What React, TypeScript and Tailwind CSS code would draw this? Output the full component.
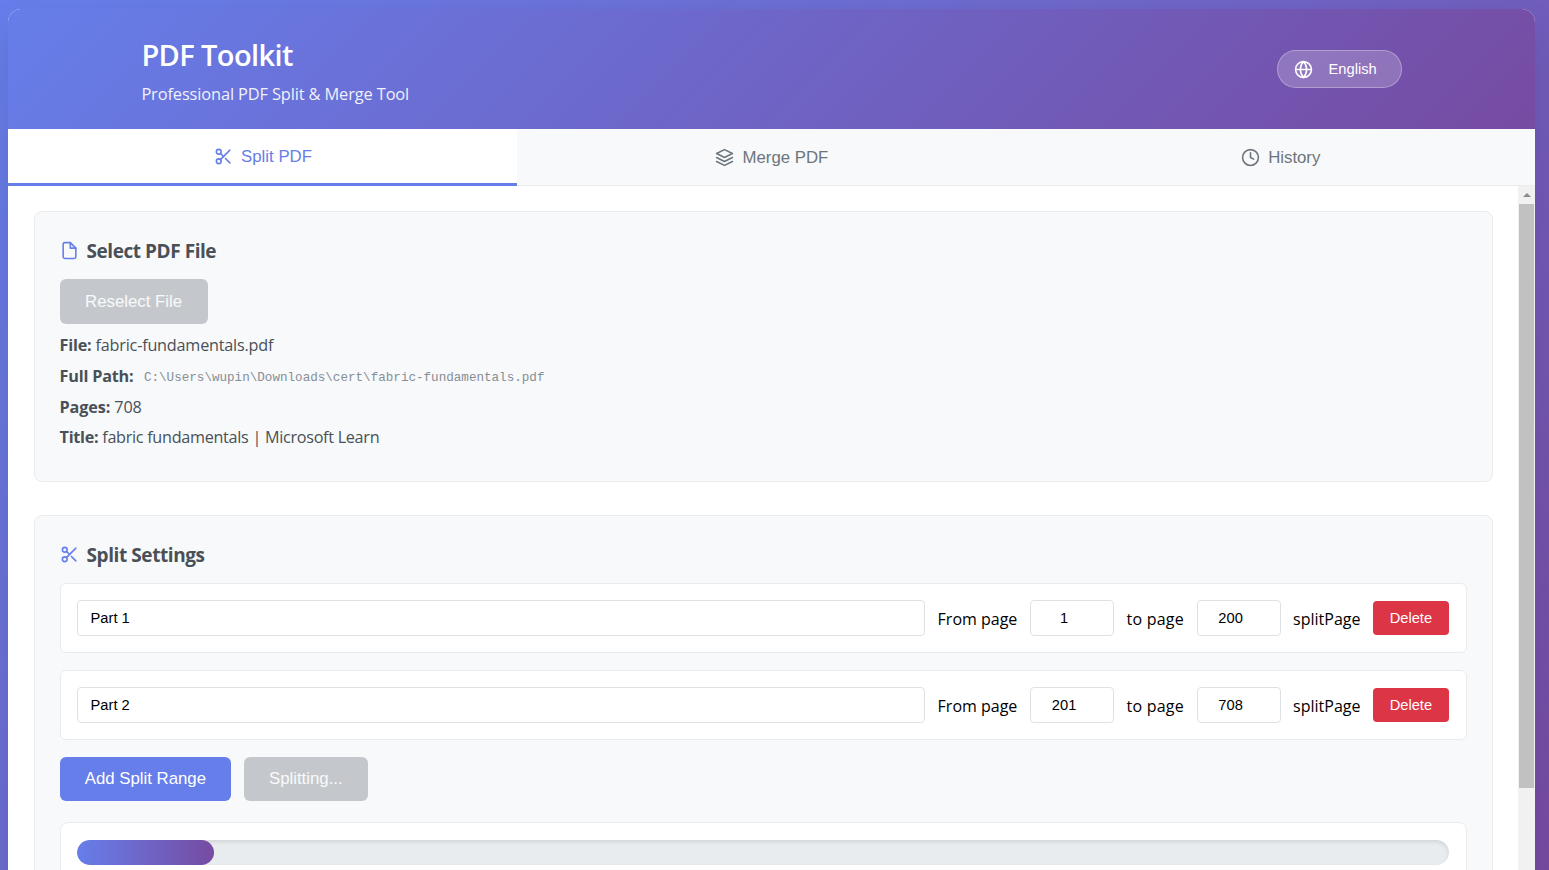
// App: schermata principale di PDF Toolkit (scheda Split)

import React from 'react';
import { FiClock, FiFile, FiGlobe, FiLayers, FiScissors } from 'react-icons/fi';

interface SplitRange {
    name: string;
    from: string;
    to: string;
}

const ranges: SplitRange[] = [
    { name: 'Part 1', from: '1', to: '200' },
    { name: 'Part 2', from: '201', to: '708' },
];

const progress = 10;

const Header: React.FC = () => (
    <header className="flex items-center justify-between h-[120px] shrink-0 pl-[133px] pr-[133px] bg-[linear-gradient(135deg,#667eea_0%,#764ba2_100%)] text-white">
        <div className="pt-[4px]">
            <h1 className="text-[29px] leading-[38px] font-semibold tracking-[-0.6px]">PDF Toolkit</h1>
            <p className="mt-[8px] text-[16.4px] leading-[24px] tracking-[-0.13px] opacity-90">Professional PDF Split &amp; Merge Tool</p>
        </div>
        <button className="flex items-center w-[125.5px] h-[37.5px] pl-[16.5px] rounded-full border border-white/30 bg-white/20 font-['Liberation_Sans',sans-serif] text-[14.7px]">
            <FiGlobe className="w-[19px] h-[19px] mr-[15.5px]" />
            English
        </button>
    </header>
);

const Tabs: React.FC = () => (
    <nav className="grid grid-cols-3 h-[57px] shrink-0 bg-[#f8f9fa] border-b border-[#e9ecef] font-['Liberation_Sans',sans-serif] text-[16.8px] text-[#6c757d]">
        <button className="flex items-center justify-center gap-[8.4px] h-[56.5px] pt-px bg-white text-[#667eea] border-b-[3px] border-[#667eea]">
            <FiScissors className="w-[19px] h-[19px]" />
            Split PDF
        </button>
        <button className="flex items-center justify-center gap-[8.4px]">
            <FiLayers className="w-[19px] h-[19px]" />
            Merge PDF
        </button>
        <button className="flex items-center justify-center gap-[8.4px]">
            <FiClock className="w-[19px] h-[19px]" />
            History
        </button>
    </nav>
);

const FileSection: React.FC = () => (
    <section className="h-[271px] shrink-0 px-[25px] pt-[25px] rounded-[8px] border border-[#e9ecef] bg-[#f8f9fa]">
        <h2 className="flex items-center gap-[8px] h-[28px] text-[19px] font-bold tracking-[-0.45px] text-[#495057]">
            <FiFile className="w-[19px] h-[19px] mb-[2px] text-[#667eea]" />
            Select PDF File
        </h2>
        <button className="mt-[14px] h-[45px] w-[148px] rounded-[6px] bg-[#c4c8cd] text-white/90 font-['Liberation_Sans',sans-serif] text-[16.8px]">
            Reselect File
        </button>
        <div className="mt-[6px] text-[16.2px] leading-[30.8px] tracking-[-0.2px] text-[#495057]">
            <p className="h-[30.8px]"><strong>File:</strong> fabric-fundamentals.pdf</p>
            <p className="flex h-[30.8px]">
                <strong>Full Path:</strong>
                <span className="ml-[10.5px] pt-[2px] font-['Liberation_Mono',monospace] text-[12.6px] tracking-normal text-[#868e96]">
                    C:\Users\wupin\Downloads\cert\fabric-fundamentals.pdf
                </span>
            </p>
            <p className="h-[30.8px] tracking-[-0.12px]"><strong>Pages:</strong> 708</p>
            <p className="h-[30.8px] tracking-[-0.29px]"><strong>Title:</strong> fabric fundamentals | Microsoft Learn</p>
        </div>
    </section>
);

const RangeRow: React.FC<{ range: SplitRange }> = ({ range }) => (
    <div className="flex items-center gap-[12.5px] h-[70px] px-[16.5px] rounded-[6px] border border-[#e9ecef] bg-white text-[16px]">
        <input
            className="flex-1 min-w-0 h-[36px] px-[12.5px] rounded-[4px] border border-[#dee2e6] font-['Liberation_Sans',sans-serif] text-[14.7px]"
            defaultValue={range.name}
        />
        <span className="w-[80px] pt-[2px] whitespace-nowrap">From page</span>
        <input
            className="w-[84px] h-[36px] pl-[12px] pr-[28px] rounded-[4px] border border-[#dee2e6] text-center font-['Liberation_Sans',sans-serif] text-[14.7px]"
            defaultValue={range.from}
        />
        <span className="w-[57.5px] pt-[2px] whitespace-nowrap tracking-[0.2px]">to page</span>
        <input
            className="w-[84px] h-[36px] pl-[12px] pr-[28px] rounded-[4px] border border-[#dee2e6] text-center font-['Liberation_Sans',sans-serif] text-[14.7px]"
            defaultValue={range.to}
        />
        <span className="w-[67px] pt-[2px] whitespace-nowrap">splitPage</span>
        <button className="w-[76.5px] h-[34px] rounded-[4px] bg-[#dc3545] text-white font-['Liberation_Sans',sans-serif] text-[14.7px]">
            Delete
        </button>
    </div>
);

const SplitSection: React.FC = () => (
    <section className="h-[480px] shrink-0 px-[25px] pt-[25px] rounded-[8px] border border-[#e9ecef] bg-[#f8f9fa]">
        <h2 className="flex items-center gap-[8px] h-[28px] text-[19px] font-bold tracking-[-0.42px] text-[#495057]">
            <FiScissors className="w-[19px] h-[19px] mb-[2px] text-[#667eea]" />
            Split Settings
        </h2>
        <div className="mt-[14px] flex flex-col gap-[17px]">
            {ranges.map((range) => (
                <RangeRow key={range.name} range={range} />
            ))}
        </div>
        <div className="mt-[16.5px] flex gap-[12.5px] font-['Liberation_Sans',sans-serif] text-[16.8px] text-white">
            <button className="w-[171.5px] h-[44.5px] rounded-[6px] bg-[#667eea]">Add Split Range</button>
            <button className="w-[124.5px] h-[44.5px] rounded-[6px] bg-[#c4c8cd] text-white/90">Splitting...</button>
        </div>
        <div className="mt-[21px] h-[140px] px-[16.5px] pt-[16.5px] rounded-[8px] border border-[#e9ecef] bg-white">
            <div className="h-[25px] rounded-full overflow-hidden bg-[#e9ecef] shadow-[inset_0_2px_4px_rgba(0,0,0,0.1)]">
                <div
                    className="h-full rounded-full bg-[linear-gradient(90deg,#667eea,#764ba2)]"
                    style={{ width: `${progress}%` }}
                />
            </div>
        </div>
    </section>
);

const Scrollbar: React.FC = () => (
    <div className="w-[17px] shrink-0 flex flex-col items-center bg-[#f1f1f1]">
        <div className="h-[18px] flex items-center">
            <svg className="w-[8px] h-[4px] fill-[#8b8b8b]" viewBox="0 0 8 4">
                <path d="M0 4L4 0L8 4Z" />
            </svg>
        </div>
        <div className="w-[15px] h-[584px] bg-[#c1c1c1]" />
    </div>
);

export const App: React.FC = () => {
    return (
        <div className="h-[870px] overflow-hidden pl-[8.4px] pr-[14px] pt-[9px] bg-[linear-gradient(135deg,#667eea_0%,#764ba2_100%)] font-['Open_Sans',sans-serif] text-black">
            <div className="flex flex-col h-[900px] rounded-[13px] overflow-hidden bg-white shadow-[0_20px_40px_rgba(0,0,0,0.1)]">
                <Header />
                <Tabs />
                <div className="flex flex-1 min-h-0">
                    <main className="flex-1 min-w-0 flex flex-col gap-[33px] overflow-hidden pl-[25.2px] pr-[25.4px] pt-[25px]">
                        <FileSection />
                        <SplitSection />
                    </main>
                    <Scrollbar />
                </div>
            </div>
        </div>
    );
};

export default App;
